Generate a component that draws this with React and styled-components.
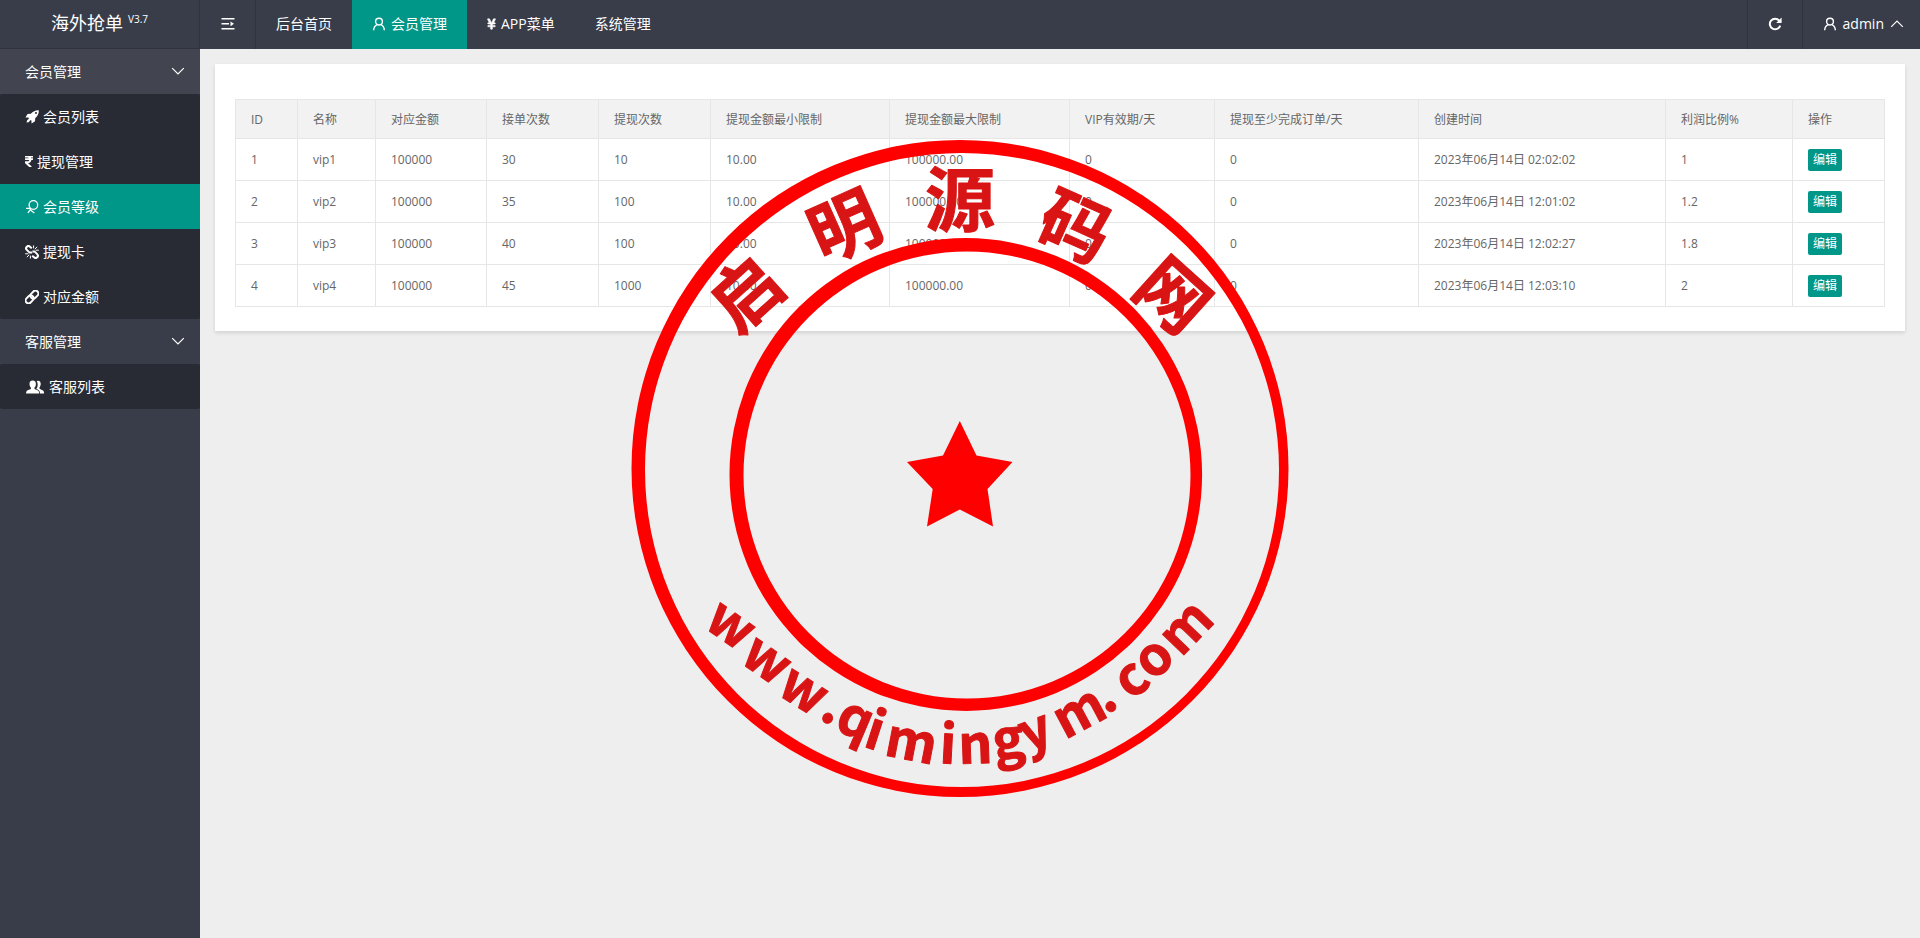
import styled, { createGlobalStyle } from "styled-components"
import { FaRupeeSign, FaYenSign } from "react-icons/fa"

const GlobalStyle = createGlobalStyle`
*{
    box-sizing:border-box;
}
body{
    margin:0;
    background-color:#eee;
    color:#666;
    font-family:"Open Sans", "Noto Sans CJK SC", sans-serif;
    font-size:14px;
    line-height:24px;
}
a{
    color:inherit;
    text-decoration:none;
}
button{
    border:none;
    font-family:inherit;
    cursor:pointer;
}
`

const Page = styled.div`
display:grid;
grid-template-columns:200px minmax(0, 1fr);
min-height:100vh;
`
const Sidebar = styled.aside`
background-color:#393d49;
color:white;
`
const Logo = styled.h1`
display:flex;
justify-content:center;
gap:5px;
height:49px;
margin:0;
border-right:1px solid #30333d;
border-bottom:1px solid #30333d;
font-size:18px;
font-weight:400;
line-height:46px;
`
const Version = styled.sup`
font-size:10px;
line-height:38px;
vertical-align:top;
`
const GroupButton = styled.button`
display:flex;
align-items:center;
justify-content:space-between;
width:100%;
height:45px;
padding:0 15px 2px 25px;
background-color:${props => props.$lit ? "#42444f" : "#393d49"};
color:white;
font-size:14px;
`
const SubMenu = styled.nav`
background-color:#282b33;
border-radius:2px;
`
const SubLink = styled.a`
display:flex;
align-items:center;
gap:4px;
height:45px;
padding-left:25px;
background-color:${props => props.$active ? "#009688" : "transparent"};
`

const Main = styled.div`
min-width:0;
`
const Header = styled.header`
display:flex;
justify-content:space-between;
height:49px;
background-color:#393d49;
color:white;
`
const HeaderSide = styled.div`
display:flex;
`
const IconButton = styled.button`
display:flex;
align-items:center;
justify-content:center;
width:56px;
padding:0 0 2px;
background-color:transparent;
border-right:1px solid #30333d;
border-left:${props => props.$bordered ? "1px solid #30333d" : "none"};
color:white;
`
const Tab = styled.a`
display:flex;
align-items:center;
gap:5px;
padding:0 20px 2px;
background-color:${props => props.$active ? "#009688" : "transparent"};
`
const UserButton = styled.button`
display:flex;
align-items:center;
gap:6px;
padding:0 16px 2px 20px;
background-color:transparent;
color:white;
font-size:14px;
`

const Card = styled.main`
margin:15px;
padding:35px 20px 24px;
background-color:white;
box-shadow:0 2px 4px rgba(0,0,0,0.12);
`
const Table = styled.table`
width:100%;
table-layout:fixed;
border-collapse:collapse;
font-size:12px;
line-height:20px;
`
const Th = styled.th`
height:39px;
padding:2px 15px 0;
border:1px solid #e6e6e6;
background-color:#f2f2f2;
font-weight:400;
text-align:left;
white-space:nowrap;
`
const Td = styled.td`
height:42px;
padding:0 15px;
border:1px solid #e6e6e6;
white-space:nowrap;
`
const EditButton = styled.button`
display:block;
height:22px;
padding:0 5px;
border-radius:2px;
background-color:#009688;
color:white;
font-size:12px;
line-height:22px;
`

const RupeeIcon = styled(FaRupeeSign)`
width:8px;
height:13px;
`
const YenIcon = styled(FaYenSign)`
width:9px;
height:12px;
stroke:currentColor;
stroke-width:24px;
`

const StampSvg = styled.svg`
position:fixed;
top:50%;
left:50%;
width:660px;
height:660px;
transform:translate(-50%, -50%);
pointer-events:none;
font-family:"Noto Sans CJK SC", sans-serif;
font-weight:700;
`

const UserIcon = () => (
    <svg width="14" height="14" viewBox="0 0 14 14" fill="none" stroke="currentColor" strokeWidth="1.4">
        <circle cx="7" cy="4.6" r="3.4" />
        <path d="M1.7 13.2C1.7 10.6 3 8.6 5.2 7.6M12.3 13.2C12.3 10.6 11 8.6 8.8 7.6" />
    </svg>
)

const ShrinkIcon = () => (
    <svg width="14" height="14" viewBox="0 0 14 14" fill="none" stroke="currentColor" strokeWidth="1.6">
        <path d="M0.5 1.8H13.5M0.5 6.8H8M0.5 11.8H13.5" />
        <path d="M9.5 4.4L13 6.8L9.5 9.2Z" fill="currentColor" stroke="none" />
    </svg>
)

const RefreshIcon = () => (
    <svg width="14" height="14" viewBox="0 0 14 14" fill="none" stroke="currentColor" strokeWidth="2">
        <path d="M11.2 3.6A5.3 5.3 0 1 0 12.2 8.6" />
        <path d="M13.6 0.6V6H8.2Z" fill="currentColor" stroke="none" />
    </svg>
)

const Chevron = ({ up }) => (
    <svg width="14" height="14" viewBox="0 0 14 14" fill="none" stroke="currentColor" strokeWidth="1.2">
        <path d={up ? "M1.2 9.8L7 4L12.8 9.8" : "M1.2 4.2L7 10L12.8 4.2"} />
    </svg>
)

const RocketIcon = () => (
    <svg width="14" height="14" viewBox="0 0 14 14" fill="currentColor">
        <path
            fillRule="evenodd"
            d="M13.8 0.2C14 3.4 12.8 5.8 10.2 8.2L10 11.2L6.6 13.4L6.4 10.6L5.6 10L3.6 12.2L1.6 12.6L2 10.6L4 8.4L3.4 7.6L0.4 7.4L2.6 4L5.8 3.8C8.2 1.2 10.6 0 13.8 0.2ZM11 2A1 1 0 1 0 11 4A1 1 0 1 0 11 2Z"
        />
    </svg>
)

const LevelIcon = () => (
    <svg width="14" height="14" viewBox="0 0 14 14" fill="none" stroke="currentColor" strokeWidth="1.3">
        <circle cx="8.4" cy="5" r="4.3" />
        <path d="M6 8.4L3 13M1 8.4H5.6M5.4 10L9.4 13" />
    </svg>
)

const BrokenLinkIcon = () => (
    <svg width="14" height="14" viewBox="0 0 14 14" fill="none" stroke="currentColor" strokeWidth="2">
        <path d="M6.8 3.2L5 1.7A2.2 2.2 0 0 0 1.8 4.9L4.6 7.6H7.2" />
        <path d="M7.2 10.8L9 12.3A2.2 2.2 0 0 0 12.2 9.1L9.4 6.4H7.4" />
        <path strokeWidth="1" d="M8.6 3.4V0.4M9.8 4.2L12.2 1.8M10.6 5.2H13.8M5.4 10.6V13.6M4.2 9.8L1.8 12.2M3.4 8.8H0.2" />
    </svg>
)

const LinkIcon = () => (
    <svg width="14" height="14" viewBox="0 0 14 14" fill="none" stroke="currentColor" strokeWidth="1.9">
        <g transform="rotate(-45 7 7)">
            <rect x="-0.8" y="4.1" width="8.8" height="5.8" rx="2.9" />
            <rect x="6" y="4.1" width="8.8" height="5.8" rx="2.9" />
        </g>
    </svg>
)

const PeopleIcon = () => (
    <svg width="20" height="14" viewBox="0 0 19 14" fill="currentColor">
        <path d="M12.4 0.8C14.2 0.6 15.4 2 15.2 4.2C15.1 5.6 14.6 6.6 14 7.3V8.8L17 10.3C18.2 10.9 18.6 11.8 18.6 13.4H14.4C14.4 11.4 13.8 10.4 12.2 9.6L10.8 8.9C12 7.4 12.6 5.2 12 3.2C11.8 2.3 11.6 1.8 11.2 1.3Z" />
        <path d="M7.2 0.4C9.4 0.4 10.6 2 10.4 4.3C10.3 5.8 9.8 6.9 9 7.6V8.9L12 10.2C13.3 10.8 13.6 11.8 13.6 13.4H0.6C0.6 11.8 1 10.8 2.2 10.2L5.4 8.9V7.6C4.6 6.9 4.1 5.8 4 4.3C3.8 2 5 0.4 7.2 0.4Z" />
    </svg>
)

const tabs = [
    { label: "后台首页" },
    { label: "会员管理", icon: <UserIcon />, active: true },
    { label: "APP菜单", icon: <YenIcon /> },
    { label: "系统管理" },
]

const groups = [
    {
        label: "会员管理",
        lit: true,
        items: [
            { label: "会员列表", icon: <RocketIcon /> },
            { label: "提现管理", icon: <RupeeIcon /> },
            { label: "会员等级", icon: <LevelIcon />, active: true },
            { label: "提现卡", icon: <BrokenLinkIcon /> },
            { label: "对应金额", icon: <LinkIcon /> },
        ],
    },
    {
        label: "客服管理",
        items: [{ label: "客服列表", icon: <PeopleIcon /> }],
    },
]

const columns = [
    ["ID", 62],
    ["名称", 78],
    ["对应金额", 111],
    ["接单次数", 112],
    ["提现次数", 112],
    ["提现金额最小限制", 179],
    ["提现金额最大限制", 180],
    ["VIP有效期/天", 145],
    ["提现至少完成订单/天", 204],
    ["创建时间", 247],
    ["利润比例%", 127],
    ["操作", 92],
]

const rows = [
    ["1", "vip1", "100000", "30", "10", "10.00", "100000.00", "0", "0", "2023年06月14日 02:02:02", "1"],
    ["2", "vip2", "100000", "35", "100", "10.00", "100000.00", "0", "0", "2023年06月14日 12:01:02", "1.2"],
    ["3", "vip3", "100000", "40", "100", "10.00", "100000.00", "0", "0", "2023年06月14日 12:02:27", "1.8"],
    ["4", "vip4", "100000", "45", "1000", "10.00", "100000.00", "0", "0", "2023年06月14日 12:03:10", "2"],
]

// glyph, centre x, centre y, angle, advance in em
const stampName = [
    ["启", 115, 154, -42, 1],
    ["明", 214, 86, -24, 1],
    ["源", 330, 60, 0, 1],
    ["码", 446, 87, 24, 1],
    ["网", 544, 155, 42, 1],
]

const stampSite = [
    ["w", 99, 489, 35, 0.86],
    ["w", 135, 524, 35, 0.86],
    ["w", 172, 554, 32, 0.86],
    [".", 202, 571, 28, 0.33],
    ["q", 224, 584, 23, 0.65],
    ["i", 244, 596, 18, 0.31],
    ["m", 281, 607, 11, 0.96],
    ["i", 318, 610, 3, 0.31],
    ["n", 345, 610, -2, 0.64],
    ["g", 379, 605, -8, 0.59],
    ["y", 406, 596, -20, 0.57],
    ["m", 451, 577, -28, 0.96],
    [".", 476, 559, -33, 0.33],
    ["c", 503, 542, -38, 0.53],
    ["o", 526, 521, -42, 0.63],
    ["m", 559, 491, -46, 0.96],
]

// rotates each glyph round its own centre, rise is the centre's height over the baseline
const StampText = ({ glyphs, size, rise }) => {
    const spots = glyphs.map(([, cx, cy, angle, advance]) => {
        const a = angle * Math.PI / 180
        const half = advance * size / 2
        return {
            x: Math.round(cx - half * Math.cos(a) - rise * Math.sin(a)),
            y: Math.round(cy - half * Math.sin(a) + rise * Math.cos(a)),
        }
    })
    return (
        <text
            x={spots.map(s => s.x).join(" ")}
            y={spots.map(s => s.y).join(" ")}
            rotate={glyphs.map(g => g[3]).join(" ")}
            fontSize={size}
            fill="#d91414"
            stroke="#d91414"
            strokeWidth="1"
            strokeLinejoin="round"
        >
            {glyphs.map(g => g[0]).join("")}
        </text>
    )
}

const ring = (cx, cy, r) =>
    `M${cx - r} ${cy}A${r} ${r} 0 1 0 ${cx + r} ${cy}A${r} ${r} 0 1 0 ${cx - r} ${cy}Z`

const Stamp = () => (
    <StampSvg viewBox="0 0 660 660">
        <g fill="red" fillRule="evenodd">
            <path d={ring(330, 329.5, 328.5) + ring(332, 331, 317)} />
            <path d={ring(335.8, 335.5, 236.3) + ring(337, 336, 223.5)} />
            <path d="M329.8 282L346.5 316.5L382.5 323L357.5 350L363 387.5L329.8 370.5L297 387.5L302.7 350L277 323L313 316.5Z" />
        </g>
        <StampText glyphs={stampName} size={70} rise={27} />
        <StampText glyphs={stampSite} size={53} rise={14} />
    </StampSvg>
)

const App = () => {
    return (
        <Page>
            <GlobalStyle />
            <Sidebar>
                <Logo>海外抢单<Version>V3.7</Version></Logo>
                {groups.map(group => (
                    <div key={group.label}>
                        <GroupButton $lit={group.lit}>{group.label}<Chevron /></GroupButton>
                        <SubMenu>
                            {group.items.map(item => (
                                <SubLink href="#" key={item.label} $active={item.active}>
                                    {item.icon}{item.label}
                                </SubLink>
                            ))}
                        </SubMenu>
                    </div>
                ))}
            </Sidebar>
            <Main>
                <Header>
                    <HeaderSide>
                        <IconButton aria-label="收起菜单"><ShrinkIcon /></IconButton>
                        {tabs.map(tab => (
                            <Tab href="#" key={tab.label} $active={tab.active}>{tab.icon}{tab.label}</Tab>
                        ))}
                    </HeaderSide>
                    <HeaderSide>
                        <IconButton aria-label="刷新" $bordered><RefreshIcon /></IconButton>
                        <UserButton><UserIcon />admin<Chevron up /></UserButton>
                    </HeaderSide>
                </Header>
                <Card>
                    <Table>
                        <colgroup>
                            {columns.map(([label, width]) => <col key={label} width={width} />)}
                        </colgroup>
                        <thead>
                            <tr>{columns.map(([label]) => <Th key={label}>{label}</Th>)}</tr>
                        </thead>
                        <tbody>
                            {rows.map(row => (
                                <tr key={row[0]}>
                                    {row.map((cell, i) => <Td key={i}>{cell}</Td>)}
                                    <Td><EditButton>编辑</EditButton></Td>
                                </tr>
                            ))}
                        </tbody>
                    </Table>
                </Card>
            </Main>
            <Stamp />
        </Page>
    )
}

export default App
